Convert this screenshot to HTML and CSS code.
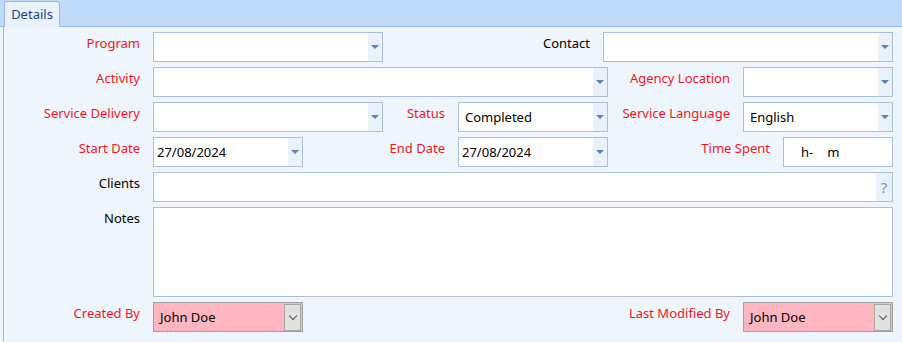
FILE: index.html
```html
<!DOCTYPE html>
<html lang="en">
<head>
    <meta charset="UTF-8">
    <title>Activity Details</title>
    <link rel="stylesheet" href="styles.css">
</head>
<body>
    <div class="tabstrip">
        <div class="tab">Details</div>
    </div>

    <div class="panel">
        <div class="row">
            <div class="lbl req w149">Program</div>
            <div class="field w230"><span class="val"></span><span class="drop"></span></div>
            <div class="lbl w220">Contact</div>
            <div class="field w290"><span class="val"></span><span class="drop"></span></div>
        </div>

        <div class="row">
            <div class="lbl req w149">Activity</div>
            <div class="field w455"><span class="val"></span><span class="drop"></span></div>
            <div class="lbl req w135">Agency Location</div>
            <div class="field w150"><span class="val"></span><span class="drop"></span></div>
        </div>

        <div class="row">
            <div class="lbl req w149">Service Delivery</div>
            <div class="field w230"><span class="val"></span><span class="drop"></span></div>
            <div class="lbl req w75">Status</div>
            <div class="field w150"><span class="val">Completed</span><span class="drop"></span></div>
            <div class="lbl req w135">Service Language</div>
            <div class="field w150"><span class="val">English</span><span class="drop"></span></div>
        </div>

        <div class="row">
            <div class="lbl req w149">Start Date</div>
            <div class="field w150"><span class="val date">27/08/2024</span><span class="drop"></span></div>
            <div class="lbl req w155">End Date</div>
            <div class="field w150"><span class="val date">27/08/2024</span><span class="drop"></span></div>
            <div class="lbl req w175">Time Spent</div>
            <div class="field w110"><span class="val time">h-<span class="gap"></span>m</span></div>
        </div>

        <div class="row">
            <div class="lbl w149">Clients</div>
            <div class="field w740"><span class="val"></span><span class="help">?</span></div>
        </div>

        <div class="row tall">
            <div class="lbl w149">Notes</div>
            <div class="field w740 notes"></div>
        </div>

        <div class="row">
            <div class="lbl req w149">Created By</div>
            <div class="field locked w150"><span class="val">John Doe</span><span class="chev"></span></div>
            <div class="lbl req w440">Last Modified By</div>
            <div class="field locked w150"><span class="val">John Doe</span><span class="chev"></span></div>
        </div>
    </div>
</body>
</html>
```

FILE: styles.css
```css
body {
    margin: 0;
    font-family: "Noto Sans", "Open Sans", sans-serif;
    font-size: 13px;
    background-color: #eef5fd;
    color: #000;
}
.tabstrip {
    display: flex;
    align-items: flex-start;
    box-sizing: border-box;
    height: 27px;
    padding: 1px 0 0 4px;
    background-color: #bfdbf9;
    border-bottom: 1px solid #9ab9e6;
}
.tab {
    box-sizing: border-box;
    width: 56px;
    height: 26px;
    margin-bottom: -1px;
    border: 1px solid #9ab9e6;
    border-bottom: none;
    border-radius: 3px 3px 0 0;
    background-color: #e9f1fb;
    color: #24457a;
    text-align: center;
    line-height: 24px;
}
.panel {
    margin-left: 3px;
    padding-top: 5px;
    border-left: 1px solid #9ab9e6;
    height: 320px;
}
.row {
    display: flex;
    height: 30px;
    margin-bottom: 5px;
}
.row.tall {
    height: 90px;
}
.lbl {
    box-sizing: border-box;
    flex: none;
    padding: 2px 13px 0 0;
    text-align: right;
    white-space: nowrap;
}
.req {
    color: #f5141e;
}
.field {
    box-sizing: border-box;
    flex: none;
    display: flex;
    height: 30px;
    border: 1px solid #a9bfdb;
    background-color: #fff;
}
.notes {
    height: 90px;
}
.val {
    flex: 1;
    padding-left: 6px;
    line-height: 28px;
    white-space: nowrap;
}
.val.date {
    padding-left: 3px;
}
.val.time {
    padding-left: 17px;
}
.gap {
    display: inline-block;
    width: 14px;
}
.drop {
    width: 14px;
    display: flex;
    align-items: center;
    justify-content: center;
    background-color: #e9f1fb;
}
.drop::after {
    content: "";
    width: 0;
    height: 0;
    border-left: 4px solid transparent;
    border-right: 4px solid transparent;
    border-top: 4px solid #5b7fb7;
}
.help {
    width: 16px;
    background-color: #e9f1fb;
    color: #6f93cc;
    font-size: 15px;
    text-align: center;
    line-height: 28px;
}
.field.locked {
    border-color: #a0a0a0;
    background-color: #ffb6c1;
}
.chev {
    box-sizing: border-box;
    width: 17px;
    margin: 1px 1px 0 0;
    height: 27px;
    border: 1px solid #a6a6a6;
    background-color: #e1e1e1;
    display: flex;
    align-items: center;
    justify-content: center;
}
.chev::after {
    content: "";
    width: 5px;
    height: 5px;
    margin-top: -4px;
    border-right: 1px solid #555;
    border-bottom: 1px solid #555;
    transform: rotate(45deg);
}
.w75 { width: 75px; }
.w110 { width: 110px; }
.w135 { width: 135px; }
.w149 { width: 149px; }
.w150 { width: 150px; }
.w155 { width: 155px; }
.w175 { width: 175px; }
.w220 { width: 220px; }
.w230 { width: 230px; }
.w290 { width: 290px; }
.w440 { width: 440px; }
.w455 { width: 455px; }
.w740 { width: 740px; }
```
